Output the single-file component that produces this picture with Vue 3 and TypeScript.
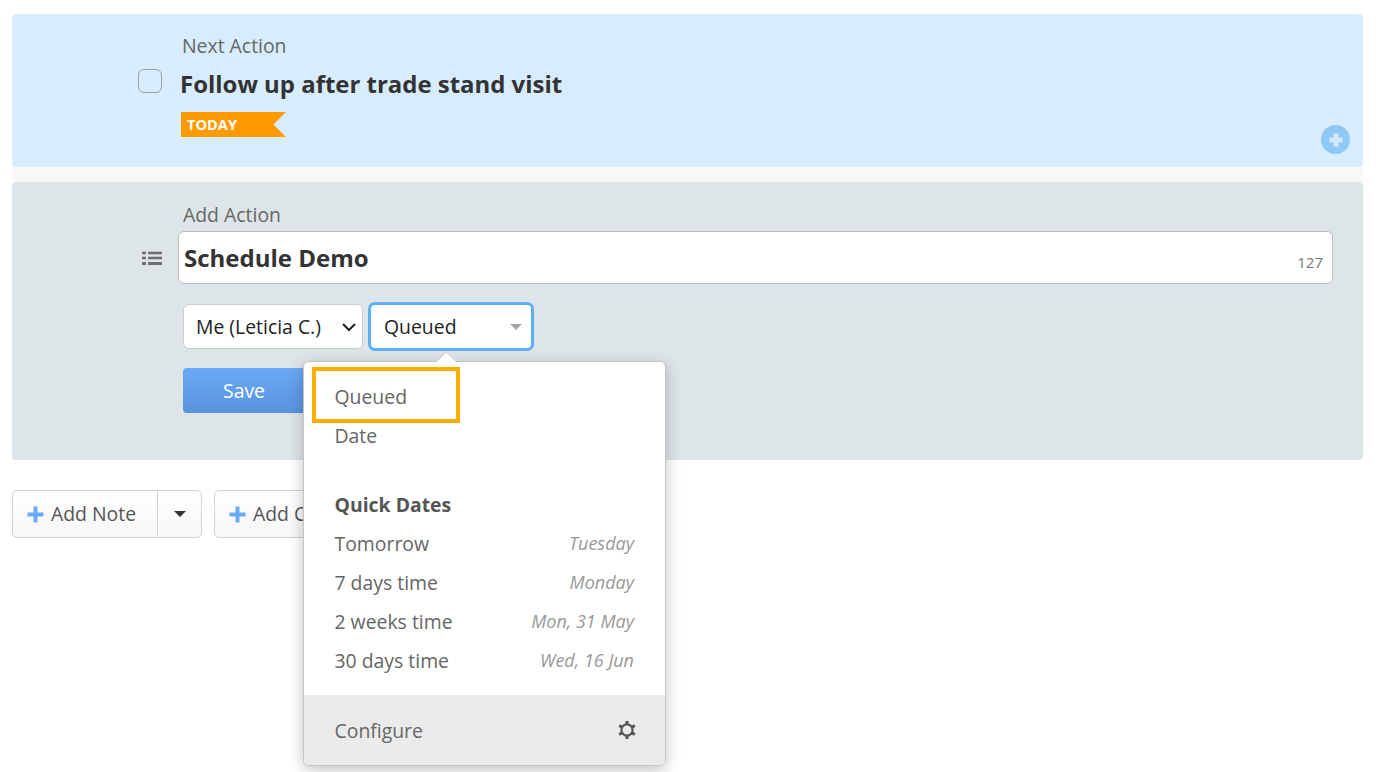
<script setup lang="ts">
const quickDates: { label: string; hint: string }[] = [
  { label: 'Tomorrow', hint: 'Tuesday' },
  { label: '7 days time', hint: 'Monday' },
  { label: '2 weeks time', hint: 'Mon, 31 May' },
  { label: '30 days time', hint: 'Wed, 16 Jun' },
]
</script>

<template>
  <div class="page">
    <section class="next">
      <div class="next-label">Next Action</div>
      <div class="next-row">
        <span class="check"></span>
        <h2 class="next-title">Follow up after trade stand visit</h2>
      </div>
      <div class="ribbon">TODAY</div>
      <span class="round-plus">
        <svg width="16" height="16" viewBox="0 0 16 16"><path d="M5.5 1.5h5v4h4v5h-4v4h-5v-4h-4v-5h4z" fill="#d4e9f9" /></svg>
      </span>
    </section>

    <div class="gap-strip"></div>

    <section class="add">
      <div class="add-label">Add Action</div>
      <div class="input-row">
        <svg class="list-icon" width="22" height="16" viewBox="0 0 22 16">
          <g fill="#707070">
            <rect x="1" y="1.7" width="4" height="2.6" />
            <rect x="7" y="1.7" width="14" height="2.6" />
            <rect x="1" y="6.7" width="4" height="2.6" />
            <rect x="7" y="6.7" width="14" height="2.6" />
            <rect x="1" y="12" width="4" height="3" />
            <rect x="7" y="12" width="14" height="3" />
          </g>
        </svg>
        <div class="title-input">
          <span>Schedule Demo</span>
          <span class="count">127</span>
        </div>
      </div>
      <div class="select-row">
        <div class="select-user">
          <span>Me (Leticia C.)</span>
          <svg width="16" height="10" viewBox="0 0 16 10"><path d="M2 2l6 6 6-6" fill="none" stroke="#222" stroke-width="2" /></svg>
        </div>
        <div class="select-when">
          <span>Queued</span>
          <i class="caret"></i>
        </div>
      </div>
      <button class="save" type="button">Save</button>
    </section>

    <div class="actions">
      <div class="btn-split">
        <div class="btn-main">
          <svg class="plus" width="17" height="17" viewBox="0 0 17 17"><path d="M6.5 0.5h4v6h6v4h-6v6h-4v-6h-6v-4h6z" fill="#69aaf7" /></svg>
          Add Note
        </div>
        <div class="btn-drop"><i class="caret dark"></i></div>
      </div>
      <div class="btn-other">
        <svg class="plus" width="17" height="17" viewBox="0 0 17 17"><path d="M6.5 0.5h4v6h6v4h-6v6h-4v-6h-6v-4h6z" fill="#69aaf7" /></svg>
        Add Call
      </div>
    </div>

    <div class="menu">
      <span class="menu-arrow"></span>
      <div class="menu-body">
        <div class="item">Queued</div>
        <div class="item">Date</div>
        <div class="menu-head">Quick Dates</div>
        <div v-for="d in quickDates" :key="d.label" class="item split">
          <span>{{ d.label }}</span>
          <em>{{ d.hint }}</em>
        </div>
      </div>
      <div class="menu-foot">
        <span>Configure</span>
        <svg width="20" height="20" viewBox="0 0 20 20">
          <circle cx="10" cy="10" r="5.6" fill="none" stroke="#555" stroke-width="2.2" />
          <g stroke="#555" stroke-width="3">
            <path d="M10 1v3.4" /><path d="M10 15.6V19" />
            <path d="M2.2 5.5l2.9 1.7" /><path d="M14.9 12.8l2.9 1.7" />
            <path d="M2.2 14.5l2.9-1.7" /><path d="M14.9 7.2l2.9-1.7" />
          </g>
        </svg>
      </div>
    </div>

    <div class="highlight"></div>
  </div>
</template>

<style scoped>
.page {
  position: relative;
  height: 772px;
  overflow: hidden;
  box-sizing: border-box;
  padding: 14px 15px 0 12px;
  background: #fff;
  font-family: "Open Sans", sans-serif;
  color: #333;
}
.next {
  position: relative;
  box-sizing: border-box;
  height: 153px;
  padding: 20px 0 0 168px;
  background: #d7ecfc;
  border-radius: 4px;
}
.next-label {
  margin-left: 2px;
  font-size: 19.4px;
  line-height: 24px;
  color: #666;
}
.next-row {
  display: flex;
  align-items: center;
  height: 38px;
  margin-top: 7px;
}
.check {
  box-sizing: border-box;
  flex: none;
  width: 24px;
  height: 24px;
  margin-left: -42px;
  margin-right: 18px;
  margin-top: -6px;
  border: 1px solid #99a0a6;
  border-radius: 6px;
}
.next-title {
  margin: 0;
  font-size: 23.95px;
  line-height: 32px;
  font-weight: 700;
  color: #333;
}
.ribbon {
  box-sizing: border-box;
  width: 105px;
  height: 25px;
  margin-top: 9px;
  margin-left: 1px;
  padding-left: 6px;
  background: #ff9a00;
  clip-path: polygon(0 0, 100% 0, 88% 50%, 100% 100%, 0 100%);
  color: #fff;
  font-size: 14.6px;
  font-weight: 700;
  line-height: 24px;
}
.round-plus {
  position: absolute;
  right: 13px;
  bottom: 13px;
  display: flex;
  align-items: center;
  justify-content: center;
  width: 29px;
  height: 29px;
  border-radius: 50%;
  background: #90c9f5;
}
.gap-strip {
  height: 15px;
  background: #f8f8f8;
}
.add {
  box-sizing: border-box;
  height: 278px;
  padding: 21px 30px 0 129px;
  background: #dee5e9;
  border-radius: 4px;
}
.add-label {
  margin-left: 42px;
  font-size: 19.4px;
  line-height: 24px;
  color: #666;
}
.input-row {
  display: flex;
  align-items: center;
  margin-top: 4px;
}
.list-icon {
  flex: none;
  width: 22px;
  margin-right: 15px;
}
.title-input {
  flex: 1;
  position: relative;
  box-sizing: border-box;
  height: 53px;
  padding-left: 5px;
  background: #fff;
  border: 1px solid #bcbcbc;
  border-radius: 6px;
  font-size: 24px;
  font-weight: 700;
  line-height: 51px;
  color: #333;
}
.count {
  position: absolute;
  right: 9px;
  bottom: 12px;
  font-size: 15px;
  font-weight: 400;
  line-height: 18px;
  color: #777;
}
.select-row {
  display: flex;
  align-items: center;
  gap: 5px;
  margin: 18px 0 0 42px;
}
.select-user {
  box-sizing: border-box;
  display: flex;
  align-items: center;
  justify-content: space-between;
  width: 180px;
  height: 45px;
  padding: 0 5px 0 12px;
  background: #fff;
  border: 1px solid #ccc;
  border-radius: 6px;
  font-size: 19.4px;
  color: #222;
}
.select-when {
  box-sizing: border-box;
  display: flex;
  align-items: center;
  justify-content: space-between;
  width: 166px;
  height: 49px;
  padding: 0 9px 0 13px;
  background: #fff;
  border: 3px solid #5cb0f8;
  border-radius: 7px;
  font-size: 19.4px;
  color: #222;
}
.caret {
  display: block;
  width: 0;
  height: 0;
  border-left: 6px solid transparent;
  border-right: 6px solid transparent;
  border-top: 6px solid #a6a6a6;
}
.caret.dark {
  border-top-color: #333;
}
.save {
  display: block;
  width: 140px;
  height: 45px;
  margin: 17px 0 0 42px;
  padding: 0 18px 0 0;
  border: 0;
  border-radius: 4px;
  background: linear-gradient(#6aa9f6, #5a94df);
  color: #fff;
  font-family: inherit;
  font-size: 19.4px;
  line-height: 45px;
  text-align: center;
}
.actions {
  display: flex;
  gap: 12px;
  margin-top: 30px;
}
.btn-split,
.btn-other {
  box-sizing: border-box;
  display: flex;
  height: 48px;
  background: linear-gradient(#fff, #f7f7f7);
  border: 1px solid #d2d2d2;
  border-radius: 5px;
  font-size: 19.4px;
  line-height: 46px;
  color: #555;
}
.btn-split {
  width: 190px;
}
.btn-main {
  box-sizing: border-box;
  display: flex;
  align-items: center;
  gap: 7px;
  width: 145px;
  padding-left: 14px;
  border-right: 1px solid #d2d2d2;
}
.btn-drop {
  flex: 1;
  display: flex;
  align-items: center;
  justify-content: center;
}
.btn-other {
  align-items: center;
  gap: 7px;
  width: 170px;
  padding-left: 14px;
}
.plus {
  flex: none;
}
.menu {
  position: absolute;
  left: 303px;
  top: 361px;
  box-sizing: border-box;
  width: 363px;
  height: 405px;
  display: flex;
  flex-direction: column;
  background: #fff;
  border: 1px solid #c4c4c4;
  border-radius: 6px;
  box-shadow: 0 4px 16px rgba(0, 0, 0, 0.24);
}
.menu-arrow {
  position: absolute;
  left: 135px;
  top: -8px;
  width: 14px;
  height: 14px;
  background: #fff;
  border-left: 1px solid #c4c4c4;
  border-top: 1px solid #c4c4c4;
  transform: rotate(45deg);
}
.menu-body {
  position: relative;
  flex: 1;
  padding: 15px 31px 0 30.5px;
}
.item {
  height: 39.3px;
  font-size: 19.4px;
  line-height: 39px;
  color: #666;
}
.split {
  display: flex;
  justify-content: space-between;
}
.split em {
  font-size: 18px;
  color: #999;
}
.menu-head {
  margin-top: 29px;
  height: 39px;
  font-size: 19.4px;
  font-weight: 700;
  line-height: 39px;
  color: #555;
}
.menu-foot {
  display: flex;
  align-items: center;
  justify-content: space-between;
  height: 70px;
  padding: 0 28px 0 30.5px;
  background: #ebebeb;
  border-radius: 0 0 6px 6px;
  font-size: 19.4px;
  color: #666;
}
.highlight {
  position: absolute;
  left: 312px;
  top: 367px;
  box-sizing: border-box;
  width: 148px;
  height: 56px;
  border: 4px solid #ffad00;
}
</style>
